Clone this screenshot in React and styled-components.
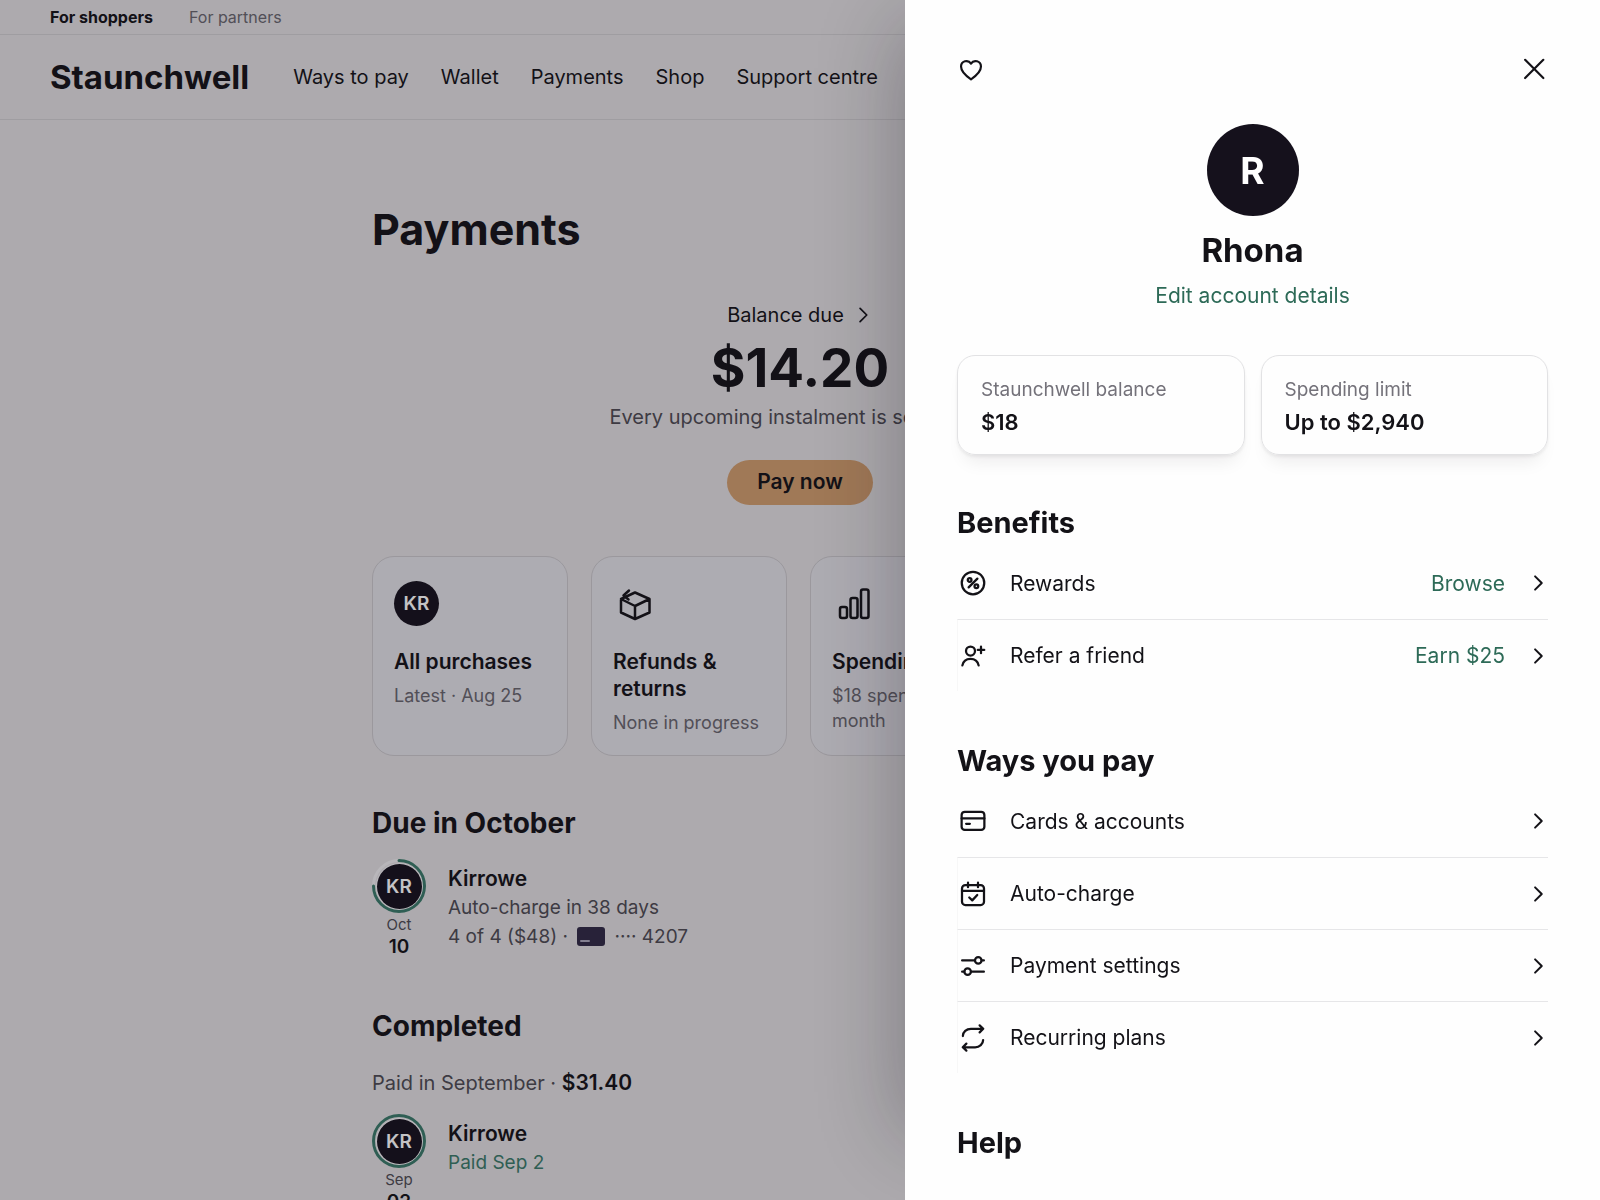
import React from 'react';
import styled, { createGlobalStyle } from 'styled-components';

export default function App() {
  return (
    <>
      <GlobalStyle />
      <Page>
        <AudienceBar>
          <AudienceLink href="#shoppers" $active>For shoppers</AudienceLink>
          <AudienceLink href="#partners">For partners</AudienceLink>
        </AudienceBar>
        <Header>
          <Logo href="#home">Staunchwell</Logo>
          <Nav>
            {navLinks.map((label) => (
              <NavLink key={label} href="#nav">{label}</NavLink>
            ))}
          </Nav>
        </Header>
        <Main>
          <PageTitle>Payments</PageTitle>
          <Balance>
            <BalanceLink href="#balance">
              Balance due
              <Chevron weight={2.1} />
            </BalanceLink>
            <Amount>$14.20</Amount>
            <BalanceNote>Every upcoming instalment is scheduled</BalanceNote>
            <PayButton type="button">Pay now</PayButton>
          </Balance>
          <Tiles>
            <Tile href="#purchases">
              <Avatar>KR</Avatar>
              <TileTitle>All purchases</TileTitle>
              <TileText>Latest · Aug 25</TileText>
            </Tile>
            <Tile href="#refunds">
              <RefundIcon />
              <TileTitle>Refunds &amp; returns</TileTitle>
              <TileText>None in progress</TileText>
            </Tile>
            <Tile href="#spending">
              <BarsIcon />
              <TileTitle>Spending</TileTitle>
              <TileText>$18 spent this month</TileText>
            </Tile>
          </Tiles>
          <SectionTitle>Due in October</SectionTitle>
          <Order>
            <OrderDate month="Oct" day="10" progress={75} />
            <OrderInfo>
              <OrderName>Kirrowe</OrderName>
              <OrderLine>Auto-charge in 38 days</OrderLine>
              <OrderLine>
                4 of 4 ($48) · <CardIcon /> ···· 4207
              </OrderLine>
            </OrderInfo>
          </Order>
          <SectionTitle>Completed</SectionTitle>
          <MonthTotal>Paid in September · <strong>$31.40</strong></MonthTotal>
          <Order>
            <OrderDate month="Sep" day="02" progress={100} />
            <OrderInfo>
              <OrderName>Kirrowe</OrderName>
              <OrderLine $paid>Paid Sep 2</OrderLine>
            </OrderInfo>
          </Order>
        </Main>
      </Page>
      <Scrim />
      <Drawer aria-label="Account">
        <DrawerBar>
          <IconButton type="button" aria-label="Favourites">
            <Icon size={26} weight={2}>
              <path d="M12 21.500C8.600 19.200 2.800 15 2.800 9.700A5 5 0 0 1 12 7a5 5 0 0 1 9.200 2.700c0 5.300-5.800 9.500-9.200 11.800Z" />
            </Icon>
          </IconButton>
          <IconButton type="button" aria-label="Close">
            <Icon size={26} weight={2}>
              <path d="M3.800 3.500l16.800 16.800M20.600 3.500L3.800 20.300" />
            </Icon>
          </IconButton>
        </DrawerBar>
        <Profile>
          <ProfileAvatar>R</ProfileAvatar>
          <ProfileName>Rhona</ProfileName>
          <ProfileLink href="#account">Edit account details</ProfileLink>
        </Profile>
        <Stats>
          <Stat>
            <StatLabel>Staunchwell balance</StatLabel>
            <StatValue>$18</StatValue>
          </Stat>
          <Stat>
            <StatLabel>Spending limit</StatLabel>
            <StatValue>Up to $2,940</StatValue>
          </Stat>
        </Stats>
        {menu.map(({ title, rows }) => (
          <MenuSection key={title}>
            <MenuTitle>{title}</MenuTitle>
            {rows.map(({ label, icon, action }) => (
              <MenuRow key={label} type="button">
                <Icon size={30} weight={1.8}>{icon}</Icon>
                <MenuLabel>{label}</MenuLabel>
                {action && <MenuAction>{action}</MenuAction>}
                <Chevron weight={2.4} />
              </MenuRow>
            ))}
          </MenuSection>
        ))}
      </Drawer>
    </>
  );
}

const Icon = ({ size, weight, children }) => (
  <IconSvg
    width={size}
    height={size}
    strokeWidth={weight}
    viewBox="0 0 24 24"
    aria-hidden="true"
  >
    {children}
  </IconSvg>
);

const Chevron = ({ weight }) => (
  <Icon size={20} weight={weight}>
    <path d="M8.500 4l8 8-8 8" />
  </Icon>
);

const RefundIcon = () => (
  <TileSvg width="45" height="45" viewBox="0 0 45 45" aria-hidden="true">
    <path d="M22 11.500L36.500 18v13.500L22 38 8 31.500V18L22 11.500ZM8 18l14 7 14.500-7M22 25v13" />
    <path d="M16 9.500L10.500 14.500 15.500 18.500" />
  </TileSvg>
);

const BarsIcon = () => (
  <TileSvg width="45" height="45" viewBox="0 0 45 45" aria-hidden="true">
    <rect x="8" y="26" width="7" height="11" rx="2" />
    <rect x="18.500" y="17" width="7" height="20" rx="2" />
    <rect x="29" y="8.500" width="7.500" height="28.500" rx="2" />
  </TileSvg>
);

const CardIcon = () => (
  <CardSvg width="28" height="19" viewBox="0 0 28 19" aria-hidden="true">
    <rect width="28" height="19" rx="3" fill="#2f2945" />
    <rect x="3" y="13" width="10" height="2" rx="1" fill="#a9a5b8" />
  </CardSvg>
);

const OrderDate = ({ month, day, progress }) => (
  <DateColumn>
    <Ring>
      <RingSvg viewBox="0 0 54 54" aria-hidden="true">
        <circle cx="27" cy="27" r="25.500" stroke="#efeef1" />
        <circle
          cx="27"
          cy="27"
          r="25.500"
          stroke="#397968"
          pathLength="100"
          strokeDasharray={`${progress} 100`}
        />
      </RingSvg>
      <RingAvatar>KR</RingAvatar>
    </Ring>
    <Month>{month}</Month>
    <Day>{day}</Day>
  </DateColumn>
);

const navLinks = ['Ways to pay', 'Wallet', 'Payments', 'Shop', 'Support centre'];

const menu = [
  {
    title: 'Benefits',
    rows: [
      {
        label: 'Rewards',
        action: 'Browse',
        icon: (
          <>
            <circle cx="12" cy="12" r="9" />
            <circle cx="9.300" cy="9.500" r="1.500" />
            <circle cx="14.700" cy="14.500" r="1.500" />
            <path d="M15.500 8.500l-7 7" />
          </>
        ),
      },
      {
        label: 'Refer a friend',
        action: 'Earn $25',
        icon: (
          <>
            <circle cx="10" cy="8" r="3.600" />
            <path d="M3.500 19.500c.7-3.600 3.200-5.300 6.500-5.300s5.800 1.700 6.500 5.300" />
            <path d="M18.400 4.500v5.200M15.800 7.100h5.200" />
          </>
        ),
      },
    ],
  },
  {
    title: 'Ways you pay',
    rows: [
      {
        label: 'Cards & accounts',
        icon: (
          <>
            <rect x="2.900" y="4.600" width="18.200" height="14.400" rx="2.500" />
            <path d="M2.900 9.900h18.200M6.500 14.200h3" />
          </>
        ),
      },
      {
        label: 'Auto-charge',
        icon: (
          <>
            <rect x="3.200" y="4.800" width="17.600" height="16" rx="2.700" />
            <path d="M3.200 9.500h17.600M8 2.900v3.600M16 2.900v3.600M9 14.800l2.400 2.300 4-4.300" />
          </>
        ),
      },
      {
        label: 'Payment settings',
        icon: (
          <>
            <path d="M3.300 7.500h10.200M19 7.500h1.700M3.300 16.500h1.700M10.500 16.500h10.200" />
            <circle cx="16.200" cy="7.500" r="2.600" />
            <circle cx="7.700" cy="16.500" r="2.600" />
          </>
        ),
      },
      {
        label: 'Recurring plans',
        icon: (
          <>
            <path d="M3.900 10.400A6.400 5.800 0 0 1 10.300 4.600H20M17.300 1.900L20.200 4.600l-2.900 2.900" />
            <path d="M20.100 13.600a6.400 5.800 0 0 1-6.400 5.800H4M6.700 22.100L3.800 19.400l2.900-2.900" />
          </>
        ),
      },
    ],
  },
  { title: 'Help', rows: [] },
];

/* Styled Components */
const GlobalStyle = createGlobalStyle`
  * {
    box-sizing: border-box;
  }

  body {
    margin: 0;
    overflow: hidden;
    background: #e0dee0;
    color: #131217;
    font-family: Inter, 'Liberation Sans', sans-serif;
  }

  h1, h2, p {
    margin: 0;
  }

  a {
    color: inherit;
    text-decoration: none;
  }

  button {
    font-family: inherit;
    color: inherit;
    cursor: pointer;
  }
`;

const IconSvg = styled.svg`
  flex: none;
  fill: none;
  stroke: currentColor;
  stroke-linecap: round;
  stroke-linejoin: round;
`;

const Page = styled.div`
  height: 100vh;
  overflow: hidden;
`;

const AudienceBar = styled.div`
  display: flex;
  gap: 36px;
  padding: 0 50px;
  border-bottom: 1px solid #cecccf;
  font-size: 16px;
  line-height: 34px;
`;

const AudienceLink = styled.a`
  color: ${({ $active }) => ($active ? '#131217' : '#67656d')};
  font-weight: ${({ $active }) => ($active ? 700 : 400)};
`;

const Header = styled.header`
  display: flex;
  align-items: center;
  gap: 44px;
  height: 85px;
  padding: 0 50px;
  border-bottom: 1px solid #cecccf;
`;

const Logo = styled.a`
  font-size: 33px;
  font-weight: 700;
`;

const Nav = styled.nav`
  display: flex;
  gap: 32px;
  font-size: 20px;
`;

const NavLink = styled.a`
  white-space: nowrap;
`;

const Main = styled.main`
  max-width: 856px;
  margin: 0 auto;
  padding-top: 80px;
`;

const PageTitle = styled.h1`
  font-size: 43px;
  font-weight: 700;
  line-height: 58px;
`;

const Balance = styled.section`
  display: flex;
  flex-direction: column;
  align-items: center;
  margin-top: 43px;
  font-size: 20px;
  line-height: 28px;
`;

const BalanceLink = styled.a`
  display: flex;
  align-items: center;
  gap: 9px;
`;

const Amount = styled.p`
  margin-top: 4px;
  font-size: 53px;
  font-weight: 700;
  line-height: 70px;
`;

const BalanceNote = styled.p`
  color: #4c4a52;
`;

const PayButton = styled.button`
  height: 45px;
  margin-top: 29px;
  padding: 0 30px 3px;
  border: none;
  border-radius: 23px;
  background: #cf9c6c;
  font-size: 21px;
  font-weight: 600;
`;

const Tiles = styled.div`
  display: grid;
  grid-template-columns: repeat(4, 196px);
  gap: 23px;
  margin-top: 51px;
`;

const Tile = styled.a`
  padding: 24px 21px 20px;
  border: 1px solid #c8c6ca;
  border-radius: 22px;
  background: #e1e0e6;
`;

const TileSvg = styled.svg`
  display: block;
  fill: none;
  stroke: currentColor;
  stroke-width: 2.5;
  stroke-linecap: round;
  stroke-linejoin: round;
`;

const TileTitle = styled.p`
  margin-top: 22px;
  font-size: 21px;
  font-weight: 600;
  line-height: 27px;
`;

const TileText = styled.p`
  margin-top: 8px;
  color: #67656d;
  font-size: 18px;
  line-height: 25px;
`;

const Avatar = styled.div`
  display: flex;
  align-items: center;
  justify-content: center;
  width: 45px;
  height: 45px;
  border-radius: 50%;
  background: #15111c;
  color: #ffffff;
  font-size: 19px;
  font-weight: 600;
`;

const SectionTitle = styled.h2`
  margin-top: 48px;
  font-size: 28px;
  font-weight: 700;
  line-height: 38px;
`;

const MonthTotal = styled.p`
  margin-top: 24px;
  color: #4c4a52;
  font-size: 20px;
  line-height: 28px;

  strong {
    color: #131217;
    font-size: 21px;
    font-weight: 600;
  }
`;

const Order = styled.div`
  display: flex;
  gap: 22px;
  margin-top: 17px;
`;

const DateColumn = styled.div`
  display: flex;
  flex-direction: column;
  align-items: center;
  width: 54px;
`;

const Ring = styled.div`
  display: grid;
  place-items: center;
  width: 54px;
  height: 54px;

  > * {
    grid-area: 1 / 1;
  }
`;

const RingSvg = styled.svg`
  width: 54px;
  height: 54px;
  fill: none;
  stroke-width: 3;
  stroke-linecap: round;
  transform: rotate(-90deg);
`;

const RingAvatar = styled(Avatar)`
  box-shadow: 0 0 0 1px #f4f3f6;
`;

const Month = styled.span`
  margin-top: 2px;
  color: #4c4a52;
  font-size: 15px;
  line-height: 20px;
`;

const Day = styled.span`
  font-size: 19px;
  font-weight: 600;
  line-height: 24px;
`;

const OrderInfo = styled.div`
  padding-top: 5px;
  line-height: 29px;
`;

const OrderName = styled.p`
  font-size: 21px;
  font-weight: 600;
`;

const OrderLine = styled.p`
  color: ${({ $paid }) => ($paid ? '#397968' : '#4c4a52')};
  font-size: 19px;
`;

const CardSvg = styled.svg`
  margin: 0 4px;
  vertical-align: -3px;
`;

const Scrim = styled.div`
  position: fixed;
  inset: 0;
  background: rgba(20, 16, 24, 0.25);
`;

const Drawer = styled.aside`
  position: fixed;
  top: 0;
  right: 0;
  bottom: 0;
  width: min(100%, 695px);
  padding: 56px 52px 0;
  overflow: hidden;
  background: #fefefe;
  box-shadow: -48px -20px 80px -48px rgba(20, 16, 24, 0.32);
`;

const DrawerBar = styled.div`
  display: flex;
  justify-content: space-between;
  padding: 0 1px;
`;

const IconButton = styled.button`
  display: flex;
  padding: 0;
  border: none;
  background: none;
`;

const Profile = styled.div`
  display: flex;
  flex-direction: column;
  align-items: center;
  margin-top: 42px;
`;

const ProfileAvatar = styled(Avatar)`
  width: 92px;
  height: 92px;
  font-size: 37px;
  font-weight: 700;
`;

const ProfileName = styled.h2`
  margin-top: 13px;
  font-size: 33px;
  font-weight: 700;
  line-height: 42px;
`;

const ProfileLink = styled.a`
  margin-top: 10px;
  color: #2d6a57;
  font-size: 21px;
  line-height: 30px;
`;

const Stats = styled.div`
  display: grid;
  grid-template-columns: 1fr 1fr;
  gap: 16px;
  margin: 44px 0 48px;
`;

const Stat = styled.div`
  padding: 19px 23px 15px;
  border: 1px solid #e2e2e4;
  border-radius: 18px;
  box-shadow: 0 2px 3px rgba(20, 16, 24, 0.06), 0 14px 18px -8px rgba(20, 16, 24, 0.08);
`;

const StatLabel = styled.p`
  color: #74727a;
  font-size: 19px;
  line-height: 30px;
`;

const StatValue = styled.p`
  font-size: 22px;
  font-weight: 600;
  line-height: 34px;
`;

const MenuSection = styled.section`
  margin-bottom: 50px;
`;

const MenuTitle = styled.h2`
  margin-bottom: 4px;
  font-size: 29px;
  font-weight: 700;
  line-height: 40px;
`;

const MenuRow = styled.button`
  display: flex;
  align-items: center;
  width: 100%;
  height: 72px;
  padding: 0;
  border: none;
  border-left: 1px solid transparent;
  background: none;
  font-size: 21px;
  text-align: left;

  & + & {
    border-top: 1px solid #e6e6e8;
    border-left-color: #f7f7f7;
  }
`;

const MenuLabel = styled.span`
  flex: 1;
  margin-left: 22px;
`;

const MenuAction = styled.span`
  margin-right: 23px;
  color: #2d6a57;
`;
